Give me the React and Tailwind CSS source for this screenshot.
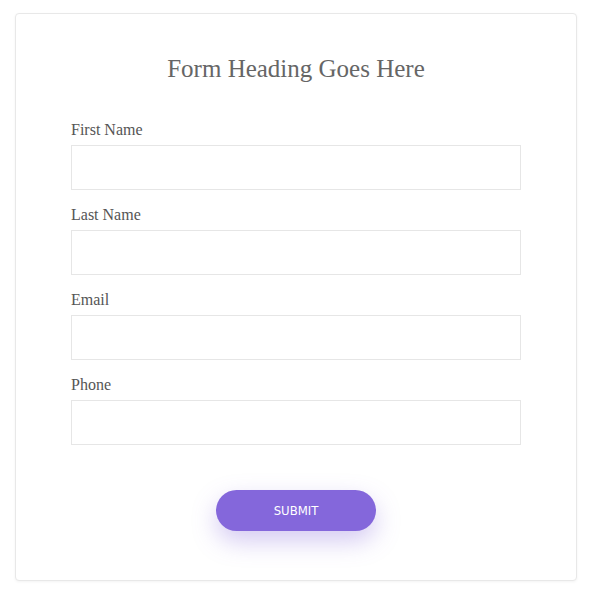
const fields = ["First Name", "Last Name", "Email", "Phone"];

const Field = ({ label }) => (
  <div className="mt-[15px] first:mt-0">
    <label className="mb-[5px] block text-[16px] leading-[20px] text-[#555]">
      {label}
    </label>
    <input
      type="text"
      className="block h-[45px] w-full border border-[#e6e6e6] bg-white px-3 outline-none"
    />
  </div>
);

export default function App() {
  return (
    <div className="min-h-[595px] bg-white pt-[13px] pb-[14px] px-[15px] font-['Liberation_Serif',serif]">
      <div className="rounded-[4px] border border-[#e8e8e8] bg-white pt-[40px] pb-[49px] shadow-[0_1px_3px_rgba(0,0,0,0.05)]">
        <h1 className="text-center text-[25px] leading-[30px] text-[#666]">
          Form Heading Goes Here
        </h1>
        <form className="mt-[36px] px-[55px]" onSubmit={(e) => e.preventDefault()}>
          {fields.map((f) => (
            <Field key={f} label={f} />
          ))}
          <div className="mt-[45px] flex justify-center">
            <button
              type="submit"
              className="h-[41px] w-[160px] rounded-full bg-[#8467db] font-['DejaVu_Sans_Condensed','DejaVu_Sans',sans-serif] text-[13px] text-white shadow-[0_10px_25px_rgba(132,103,219,0.35)]"
            >
              SUBMIT
            </button>
          </div>
        </form>
      </div>
    </div>
  );
}
